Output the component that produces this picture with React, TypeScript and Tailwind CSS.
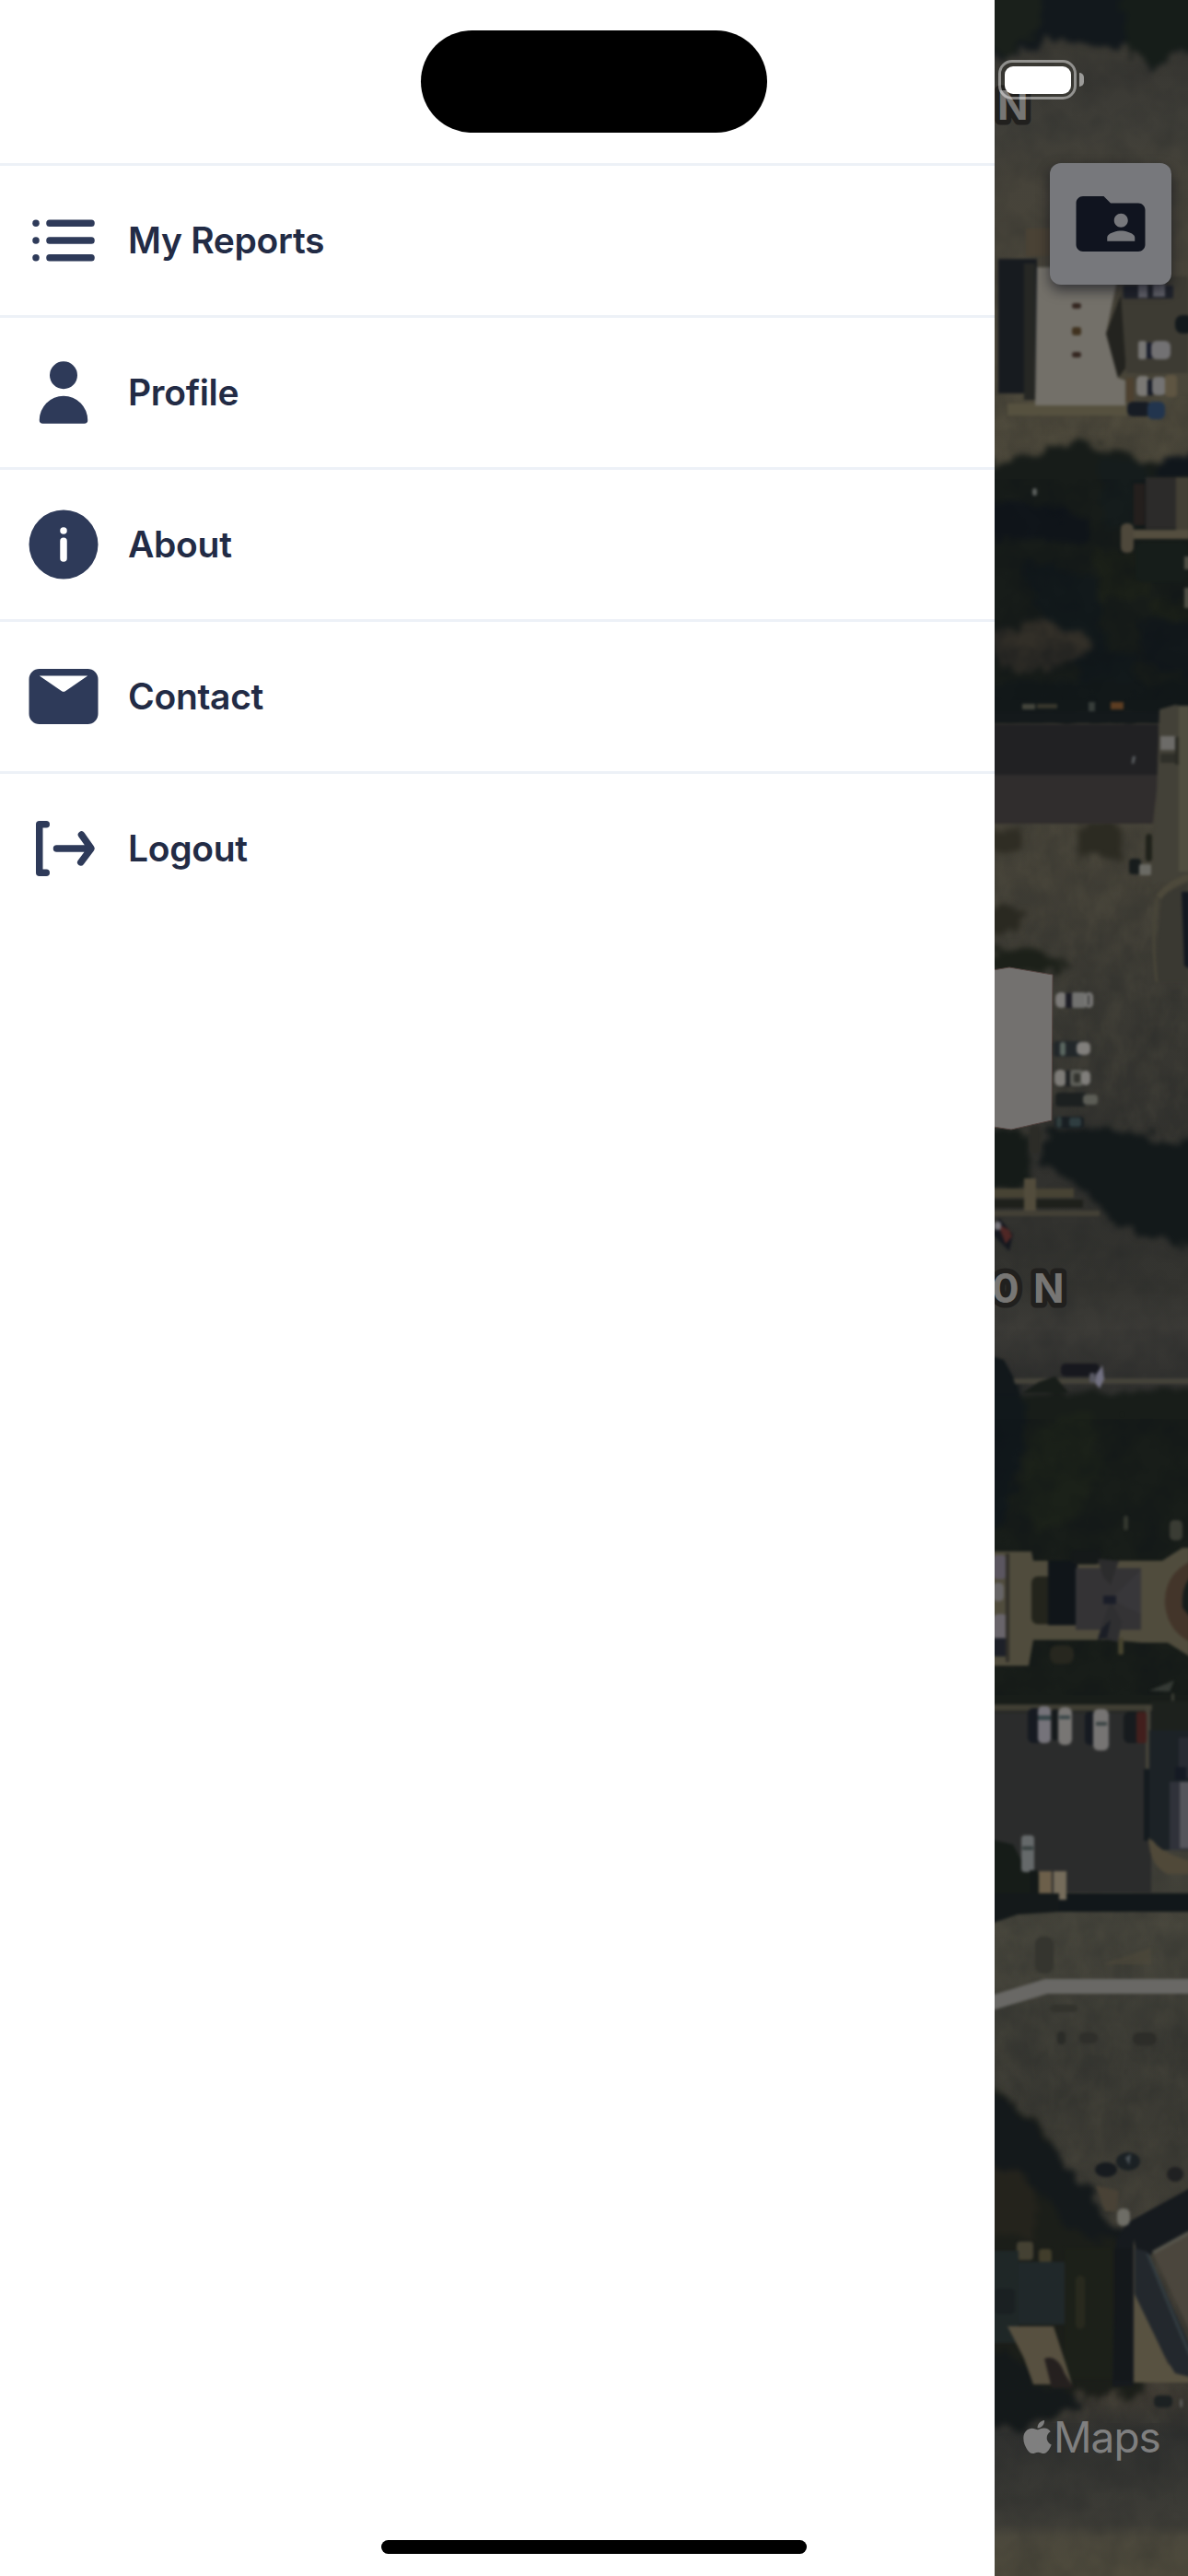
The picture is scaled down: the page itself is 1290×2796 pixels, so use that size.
import React from "react";
import { FaApple } from "react-icons/fa";
import { MdFolderShared } from "react-icons/md";

const iconClass = "h-[90px] w-[90px] shrink-0 fill-[#2e3a59]";

const ListIcon = () => (
  <svg viewBox="0 0 24 24" className={iconClass}>
    <circle cx="4" cy="7" r="1" />
    <circle cx="4" cy="12" r="1" />
    <circle cx="4" cy="17" r="1" />
    <rect x="7" y="11" width="14" height="2" rx=".94" />
    <rect x="7" y="16" width="14" height="2" rx=".94" />
    <rect x="7" y="6" width="14" height="2" rx=".94" />
  </svg>
);

const PersonIcon = () => (
  <svg viewBox="0 0 24 24" className={iconClass}>
    <path d="M12 11a4 4 0 1 0-4-4 4 4 0 0 0 4 4z" />
    <path d="M18 21a1 1 0 0 0 1-1 7 7 0 0 0-14 0 1 1 0 0 0 1 1z" />
  </svg>
);

const InfoIcon = () => (
  <svg viewBox="0 0 24 24" className={iconClass}>
    <path d="M12 2a10 10 0 1 0 10 10A10 10 0 0 0 12 2zm1 14a1 1 0 0 1-2 0v-5a1 1 0 0 1 2 0zm-1-7a1 1 0 1 1 1-1 1 1 0 0 1-1 1z" />
  </svg>
);

const EmailIcon = () => (
  <svg viewBox="0 0 24 24" className={iconClass}>
    <path d="M19 4H5a3 3 0 0 0-3 3v10a3 3 0 0 0 3 3h14a3 3 0 0 0 3-3V7a3 3 0 0 0-3-3zm0 2l-6.5 4.47a1 1 0 0 1-1 0L5 6z" />
  </svg>
);

const LogoutIcon = () => (
  <svg viewBox="0 0 24 24" className={iconClass}>
    <path d="M7 6a1 1 0 0 0 0-2H5a1 1 0 0 0-1 1v14a1 1 0 0 0 1 1h2a1 1 0 0 0 0-2H6V6z" />
    <path d="M20.82 11.42l-2.82-4a1 1 0 0 0-1.39-.24 1 1 0 0 0-.24 1.4L18.09 11H10a1 1 0 0 0 0 2h8l-1.8 2.4a1 1 0 0 0 .2 1.4 1 1 0 0 0 .6.2 1 1 0 0 0 .8-.4l3-4a1 1 0 0 0 .02-1.18z" />
  </svg>
);

const items = [
  { label: "My Reports", Icon: ListIcon },
  { label: "Profile", Icon: PersonIcon },
  { label: "About", Icon: InfoIcon },
  { label: "Contact", Icon: EmailIcon },
  { label: "Logout", Icon: LogoutIcon },
];

type Box = [number, number, number, number, string, number?];
const boxes = (list: Box[]) =>
  list.map(([x, y, w, h, fill, rx], i) => (
    <rect key={i} x={x} y={y} width={w} height={h} fill={fill} rx={rx ?? 0} />
  ));

/* Dimmed satellite imagery, drawn in screen coordinates. */
function Satellite() {
  return (
    <svg viewBox="1080 0 210 2796" className="absolute inset-0 h-full w-full">
      <defs>
        <filter id="soft" x="-5%" y="-1%" width="110%" height="102%" colorInterpolationFilters="sRGB">
          <feGaussianBlur stdDeviation="1.6" />
        </filter>
        <filter id="rough" x="-10%" y="-5%" width="120%" height="110%" colorInterpolationFilters="sRGB">
          <feTurbulence type="fractalNoise" baseFrequency="0.06" numOctaves="3" seed="4" />
          <feDisplacementMap in="SourceGraphic" scale="24" xChannelSelector="R" yChannelSelector="G" />
          <feGaussianBlur stdDeviation="3" />
        </filter>
        <filter id="mottle" x="0" y="0" width="100%" height="100%" colorInterpolationFilters="sRGB">
          <feTurbulence type="fractalNoise" baseFrequency="0.03" numOctaves="3" seed="9" />
          <feColorMatrix values="0 0 0 0 0.05  0 0 0 0 0.07  0 0 0 0 0.09  2 0 0 0 -0.7" />
        </filter>
        <filter id="light" x="0" y="0" width="100%" height="100%" colorInterpolationFilters="sRGB">
          <feTurbulence type="fractalNoise" baseFrequency="0.05 0.03" numOctaves="3" seed="21" />
          <feColorMatrix values="0 0 0 0 0.42  0 0 0 0 0.40  0 0 0 0 0.32  1.6 0 0 0 -0.65" />
        </filter>
        <linearGradient id="ground" gradientUnits="userSpaceOnUse" x1="0" y1="0" x2="0" y2="2796">
          <stop offset="0" stopColor="#3f3d34" />
          <stop offset=".03" stopColor="#3a3934" />
          <stop offset=".05" stopColor="#3f3e38" />
          <stop offset=".07" stopColor="#46433a" />
          <stop offset=".16" stopColor="#4b473a" />
          <stop offset=".33" stopColor="#454238" />
          <stop offset=".39" stopColor="#3a3933" />
          <stop offset=".46" stopColor="#31312e" />
          <stop offset=".5" stopColor="#343430" />
          <stop offset=".515" stopColor="#3c3b37" />
          <stop offset=".535" stopColor="#31312f" />
          <stop offset=".75" stopColor="#45443b" />
          <stop offset=".8" stopColor="#393933" />
          <stop offset=".86" stopColor="#403e36" />
          <stop offset=".93" stopColor="#3f3b33" />
          <stop offset=".945" stopColor="#30312f" />
          <stop offset=".98" stopColor="#3e3d37" />
          <stop offset=".985" stopColor="#4b483c" />
          <stop offset="1" stopColor="#4e4a3c" />
        </linearGradient>
      </defs>
      <rect x="1080" y="0" width="210" height="2796" fill="url(#ground)" />
      <rect x="1080" y="430" width="210" height="830" filter="url(#light)" opacity=".22" />
      <rect x="1080" y="2070" width="210" height="560" filter="url(#light)" opacity=".18" />
      <rect x="1080" y="0" width="210" height="2796" filter="url(#mottle)" opacity=".14" />

      {/* tree canopy, lawns and cast shadows */}
      <g filter="url(#rough)">
        <path d="M1060 -20H1310V55L1275 60 1252 82 1225 52 1180 48 1135 38 1120 55 1060 65z" fill="#12181c" />
        <path d="M1060 -20H1128L1130 25 1105 55 1060 60z" fill="#1a201b" />
        <path d="M1215 -10H1310V50L1275 58 1252 80 1225 52z" fill="#161d19" />
        <path d="M1060 505L1130 492 1165 478 1215 488 1245 505 1310 485V780H1060z" fill="#171c19" />
        <path d="M1060 540L1150 550 1190 570 1180 590 1060 582z" fill="#10151a" />
        <path d="M1190 495L1245 505 1248 570 1200 575z" fill="#151c1c" />
        <path d="M1260 495L1310 488V518H1260z" fill="#10161b" />
        <path d="M1185 600H1250V670L1300 690V650H1190z" fill="#1b2018" />
        <path d="M1110 610L1190 625 1200 700 1235 710 1230 760 1180 740 1120 650z" fill="#12191b" />
        <path d="M1070 690L1130 675 1180 690 1190 705 1135 730 1090 725z" fill="#322f28" />
        <path d="M1240 670H1310V740L1240 720z" fill="#12181b" />
        <path d="M1060 740H1310V782H1060z" fill="#121819" />
        <path d="M1170 895L1215 893 1220 935 1190 925 1170 930z" fill="#2c2b22" />
        <path d="M1060 905L1105 900 1108 920 1060 925z" fill="#2f2d24" />
        <path d="M1060 985L1115 985 1100 1010 1060 1018z" fill="#2a2921" />
        <path d="M1060 1035L1120 1028 1160 1050 1120 1058 1060 1055z" fill="#1c2019" />
        <path d="M1135 1228L1200 1225 1290 1240 1310 1240V1358L1260 1342 1215 1332 1190 1305 1170 1285 1130 1265z" fill="#13191a" />
        <path d="M1060 1225L1115 1228 1122 1285 1060 1290z" fill="#151b18" />
        <path d="M1060 1510L1110 1512 1310 1508V1870H1060z" fill="#181d19" />
        <path d="M1060 1475L1095 1485 1115 1530 1105 1600 1090 1660H1060z" fill="#11181b" />
        <path d="M1120 1555L1150 1540 1185 1530 1195 1600 1170 1650 1130 1660 1105 1640z" fill="#1b2119" />
        <path d="M1060 2265L1090 2272 1130 2310 1170 2370 1210 2410 1230 2440 1240 2460V2600H1060z" fill="#1b1e19" />
        <path d="M1060 2270L1095 2280 1140 2330 1200 2400 1225 2430 1170 2430 1130 2380 1060 2345z" fill="#14191b" />
        <path d="M1060 2350L1110 2355 1130 2400 1120 2430 1060 2430z" fill="#24231c" />
        <path d="M1060 2545L1110 2560 1130 2590 1165 2595 1170 2615 1110 2635 1060 2635z" fill="#14191a" />
      </g>
      <rect x="1080" y="520" width="210" height="240" filter="url(#mottle)" opacity=".4" />
      <rect x="1080" y="1540" width="210" height="300" filter="url(#mottle)" opacity=".35" />

      <g filter="url(#soft)">
        {/* white-roofed building and its parked cars */}
        {boxes([
          [1114, 248, 30, 30, "#4a4235"],
          [1084, 281, 42, 146, "#171b1f"],
          [1112, 286, 12, 148, "#262724"],
          [1094, 438, 130, 13, "#56513f"],
        ])}
        <path d="M1126 290H1216L1201 362 1214 410 1222 413V440H1124z" fill="#737069" />
        <path d="M1217 320L1201 362 1214 410 1222 400V340z" fill="#23231f" />
        <path d="M1217 320L1222 300H1290V405H1223z" fill="#3d3b33" />
        {boxes([
          [1220, 310, 54, 14, "#20232b"],
          [1236, 308, 10, 15, "#62626a"],
          [1252, 308, 13, 14, "#62626a"],
          [1164, 329, 10, 6, "#33251f", 3],
          [1164, 355, 10, 9, "#40321f", 3],
          [1164, 382, 10, 6, "#33251f", 3],
          [1236, 370, 9, 20, "#777674", 3],
          [1245, 372, 7, 17, "#171b2a"],
          [1250, 370, 21, 20, "#727173", 6],
          [1223, 410, 8, 26, "#4e4130"],
          [1234, 408, 14, 22, "#7a7874", 5],
          [1246, 412, 6, 17, "#161a25"],
          [1251, 409, 15, 20, "#747373", 5],
          [1265, 407, 13, 24, "#5e5542", 4],
          [1224, 436, 26, 16, "#171c24", 6],
          [1246, 436, 19, 19, "#22354e", 6],
          [1276, 342, 20, 20, "#13191c", 8],
          [1121, 530, 5, 8, "#5a5e5b", 2],
        ])}
        {/* small grey roof and walkway */}
        {boxes([
          [1231, 525, 12, 45, "#241f1d"],
          [1244, 518, 34, 56, "#2c2b2a"],
          [1277, 518, 15, 60, "#434035"],
          [1222, 575, 70, 10, "#544e3f"],
          [1217, 568, 14, 32, "#4e483b", 6],
          [1233, 588, 57, 44, "#161d1a", 8],
          [1286, 604, 6, 14, "#4e4e44"],
          [1286, 638, 6, 22, "#4e4e44"],
          [1110, 764, 14, 6, "#45463d"],
          [1126, 764, 22, 5, "#38372d"],
          [1182, 762, 7, 10, "#383e3b"],
          [1206, 762, 14, 8, "#5c3d22"],
          [1070, 772, 190, 13, "#14191b"],
        ])}
        {/* long dark roof */}
        <path d="M1070 786H1258V841H1070z" fill="#212123" />
        <path d="M1070 841H1258L1252 894H1070z" fill="#302d2d" />
        <path d="M1229 829L1230 821H1233L1231 829z" fill="#65696c" />
        <path d="M1259 770L1276 765 1292 768V950L1250 960 1256 860z" fill="#434138" />
        <path d="M1280 766H1292V946H1280z" fill="#504e40" />
        {boxes([
          [1276, 800, 4, 30, "#2a2a24"],
          [1260, 799, 16, 15, "#6c6b68"],
          [1260, 818, 16, 10, "#2f2f29"],
          [1226, 932, 13, 17, "#171c1c", 4],
          [1244, 905, 7, 30, "#20221b", 4],
          [1237, 938, 13, 12, "#6a6a64", 2],
        ])}
        <path d="M1262 972L1290 958V1066H1258L1254 1050z" fill="#3a3932" />
        <path d="M1256 975C1252 1010 1252 1030 1256 1066" stroke="#484538" strokeWidth="3" fill="none" />
        <path d="M1258 974Q1270 958 1292 952" stroke="#4d493b" strokeWidth="7" fill="none" />
        <path d="M1283 968H1292V1052L1286 1048z" fill="#131820" />
      </g>

      {/* light warehouse */}
      <path d="M1078 1053L1096 1050 1143 1058 1142 1216 1098 1226 1078 1223z" fill="#73716f" stroke="#564643" strokeWidth="1" />
      <g filter="url(#soft)">
        {boxes([
          [1146, 1077, 13, 17, "#7d7b79", 6],
          [1157, 1078, 8, 16, "#1c1c24"],
          [1164, 1077, 15, 17, "#71716f", 2],
          [1178, 1077, 9, 17, "#7a7977", 5],
          [1181, 1080, 2, 11, "#3a3a3a"],
          [1144, 1130, 32, 17, "#22272a", 4],
          [1151, 1131, 6, 15, "#5a6660", 3],
          [1169, 1131, 15, 14, "#817f7c", 5],
          [1145, 1161, 13, 18, "#7e7c78", 6],
          [1157, 1162, 6, 17, "#1d2022"],
          [1162, 1161, 14, 18, "#5d5e58", 3],
          [1166, 1165, 7, 10, "#33342f", 2],
          [1174, 1162, 10, 16, "#807e7b", 5],
          [1146, 1186, 34, 15, "#1c2020", 4],
          [1176, 1188, 16, 11, "#5c5d56", 4],
          [1145, 1212, 32, 13, "#181e22", 4],
          [1147, 1212, 6, 12, "#303c3c", 3],
          [1161, 1213, 13, 10, "#2f3d40", 3],
        ])}
        {/* road verge */}
        {boxes([
          [1070, 1290, 96, 10, "#474334"],
          [1070, 1302, 106, 9, "#1e201b"],
          [1112, 1279, 13, 36, "#524c3c"],
          [1070, 1314, 124, 6, "#434036"],
          [1118, 1222, 12, 30, "#2c2c27", 5],
          [1070, 1496, 225, 6, "#45433a"],
        ])}
        <path d="M1078 1340L1085 1322 1100 1340 1096 1358z" fill="#15181f" />
        <path d="M1083 1328L1096 1335 1099 1342 1092 1350z" fill="#4f2725" />
        {boxes([
          [1080, 1326, 7, 9, "#76747a", 3],
          [1152, 1480, 42, 14, "#17181e", 5],
          [1183, 1490, 6, 11, "#595963", 3],
        ])}
        <path d="M1190 1492L1197 1482 1199 1497 1194 1507 1189 1501z" fill="#727182" />
        <path d="M1070 1470L1090 1476 1100 1495 1106 1515H1070z" fill="#12181b" />
        <path d="M1110 1512L1128 1500 1146 1494 1160 1512z" fill="#181d19" />
        {boxes([
          [1220, 1645, 5, 16, "#34372f", 3],
          [1218, 1535, 1, 1, "#20251d"],
          [1270, 1650, 14, 22, "#3a3c34", 5],
        ])}

        {/* house with circular drive */}
        <path d="M1078 1684H1120L1122 1694H1262L1284 1680H1292V1798L1268 1783H1240L1208 1780H1122L1117 1808H1078z" fill="#504c3d" />
        <path d="M1292 1695Q1263 1710 1265 1742 1268 1770 1292 1782z" fill="#43352a" />
        <path d="M1292 1712Q1282 1725 1284 1745L1292 1755z" fill="#171d1b" />
        {boxes([
          [1120, 1711, 24, 52, "#23241c", 7],
          [1138, 1694, 32, 70, "#101519"],
          [1163, 1682, 32, 16, "#151919", 5],
          [1168, 1702, 71, 67, "#343335"],
          [1078, 1688, 15, 26, "#5b5660", 5],
          [1078, 1718, 12, 20, "#676566", 5],
          [1078, 1752, 17, 28, "#69656b", 6],
          [1078, 1778, 16, 20, "#1d2028", 3],
          [1092, 1686, 4, 118, "#302e28"],
          [1214, 1778, 6, 18, "#46432f", 2],
        ])}
        <path d="M1192 1692L1215 1694 1206 1720 1198 1712z" fill="#2c2c2d" />
        <path d="M1206 1736L1218 1760 1214 1782 1192 1778z" fill="#2f2f31" />
        <path d="M1239 1704L1206 1736 1239 1752z" fill="#38373a" />
        <path d="M1198 1732h14v9h-14z" fill="#1a1d28" />
        <path d="M1196 1768L1206 1758 1202 1778 1192 1780z" fill="#1b1e26" />
        <path d="M1248 1835L1275 1824 1270 1836z" fill="#353a35" />
        {boxes([[1140, 1786, 26, 20, "#27271f", 8], [1272, 1838, 3, 12, "#3b3d35", 1]])}

        {/* parking lot */}
        {boxes([
          [1070, 1858, 180, 196, "#2b2c2c"],
          [1250, 1846, 44, 34, "#1d211d"],
          [1070, 1850, 181, 7, "#403e34"],
          [1244, 1852, 5, 70, "#444238"],
          [1116, 1854, 17, 38, "#161a21", 6],
          [1127, 1852, 14, 40, "#75737a", 5],
          [1127, 1862, 14, 5, "#354447"],
          [1142, 1855, 8, 34, "#161a1c", 4],
          [1149, 1853, 15, 41, "#787674", 6],
          [1150, 1862, 12, 4, "#3b4749"],
          [1178, 1858, 13, 36, "#161a21", 5],
          [1187, 1855, 17, 45, "#767473", 6],
          [1190, 1869, 12, 4, "#3b4445"],
          [1220, 1858, 18, 34, "#171b1e", 6],
          [1234, 1858, 11, 34, "#421f1d", 3],
          [1242, 1920, 20, 78, "#141a1e"],
          [1248, 1878, 46, 130, "#1c2226"],
          [1270, 1934, 24, 74, "#30323a"],
          [1281, 1934, 12, 72, "#55555b"],
          [1280, 1886, 12, 44, "#282b33"],
          [1276, 1918, 12, 14, "#151a24"],
        ])}
        <path d="M1070 1995L1100 2002 1112 2025 1130 2035 1132 2060H1070z" fill="#161c18" />
        {boxes([
          [1109, 1992, 14, 40, "#65696a", 4],
          [1110, 2004, 12, 4, "#37403f"],
          [1070, 2055, 225, 20, "#11171a"],
          [1118, 2030, 9, 30, "#141918"],
          [1128, 2031, 14, 31, "#6c5f4a"],
          [1144, 2031, 14, 31, "#756c5b"],
        ])}
        <path d="M1247 1995Q1248 2025 1268 2034H1292V2020Q1262 2012 1252 1998z" fill="#504939" />
        <path d="M1070 2055H1150V2075L1105 2078 1070 2090z" fill="#14191a" />
        <path d="M1070 2176L1136 2156H1300" stroke="#696865" strokeWidth="16" fill="none" />
        <path d="M1208 2128L1250 2114V2132H1198z" fill="#4f4a3b" opacity=".6" />
        {boxes([
          [1124, 2102, 20, 40, "#35352f", 8],
          [1140, 2176, 30, 8, "#33332d", 4],
          [1230, 2206, 26, 14, "#2d2d29", 7],
          [1148, 2205, 9, 14, "#2b2c28", 4],
          [1172, 2206, 20, 12, "#2f2f2b", 6],
        ])}

        {/* shrubs and angled building */}
        <ellipse cx="1201" cy="2355" rx="12" ry="8" fill="#171b1f" />
        <ellipse cx="1225" cy="2346" rx="13" ry="10" fill="#1b2124" />
        <path d="M1222 2342L1228 2338 1226 2350z" fill="#4b5358" />
        <ellipse cx="1276" cy="2360" rx="9" ry="8" fill="#202122" />
        <path d="M1190 2372L1215 2378 1212 2400 1200 2400z" fill="#494236" />
        <path d="M1225 2412L1292 2375V2422L1252 2444 1240 2460 1230 2590H1208L1212 2430z" fill="#161a1e" />
        <path d="M1252 2446L1292 2422V2530z" fill="#4b463d" />
        <path d="M1231 2430V2586H1292V2578L1268 2566 1246 2515z" fill="#585241" />
        <path d="M1232 2440L1246 2444 1292 2545V2580L1276 2576 1264 2556 1232 2490z" fill="#23282d" />
        <path d="M1246 2446L1292 2556" stroke="#343e42" strokeWidth="3" fill="none" />
        <path d="M1252 2445L1292 2423" stroke="#55544b" strokeWidth="4" fill="none" />
        {boxes([
          [1213, 2397, 14, 19, "#6e6d66", 6],
          [1210, 2440, 18, 144, "#14181b"],
          [1156, 2440, 52, 142, "#1c2019"],
          [1168, 2470, 10, 58, "#28291e", 5],
          [1104, 2433, 18, 20, "#444133", 4],
          [1128, 2441, 14, 15, "#413d2b", 4],
          [1070, 2443, 36, 100, "#1f2727"],
          [1106, 2455, 50, 68, "#20282a"],
          [1080, 2484, 22, 28, "#1a2022", 5],
          [1253, 2600, 20, 13, "#1c2122", 5],
          [1281, 2604, 3, 9, "#5c5c58", 2],
        ])}
        <path d="M1094 2525H1144L1158 2568 1164 2588H1122L1112 2560z" fill="#575040" />
        <path d="M1134 2560Q1148 2555 1156 2576L1166 2592 1142 2592z" fill="#25201f" />
      </g>

      <g
        fill="#777674"
        stroke="#21201e"
        strokeWidth="11"
        strokeLinejoin="round"
        paintOrder="stroke"
        className="font-['Inter',sans-serif] text-[44px] font-bold"
      >
        <text x="1083" y="130">N</text>
        <text x="1077" y="1414">0</text>
        <text x="1122" y="1414">N</text>
      </g>
    </svg>
  );
}

function Battery() {
  return (
    <div className="absolute top-[65px] left-[4px] flex items-center gap-[3px]">
      <div className="h-[43px] w-[85px] rounded-[15px] border-[3.5px] border-white/45 p-[3.5px]">
        <div className="h-full w-full rounded-[9px] bg-white" />
      </div>
      <div className="h-[15px] w-[5px] rounded-r-full bg-white/50" />
    </div>
  );
}

export default function App() {
  return (
    <div className="relative flex h-[2796px] w-[1290px] overflow-hidden bg-white font-['Inter','Liberation_Sans',sans-serif]">
      <nav className="flex w-[1080px] shrink-0 flex-col pt-[177px]">
        {items.map(({ label, Icon }) => (
          <button
            key={label}
            className="flex h-[165px] items-center border-t-[3px] border-[#edf1f7] pl-6 text-left"
          >
            <Icon />
            <span className="ml-[25px] text-[39px] leading-[48px] font-semibold tracking-[-0.3px] text-[#222b45]">
              {label}
            </span>
          </button>
        ))}
      </nav>

      <aside className="relative w-[210px] shrink-0 overflow-hidden bg-[#3b3a35]">
        <Satellite />
        <Battery />
        <button className="absolute top-[177px] left-[60px] flex h-[132px] w-[132px] items-center justify-center rounded-xl bg-[#77787c] shadow-[0_6px_14px_rgba(10,12,22,0.6)]">
          <MdFolderShared className="h-[90px] w-[90px] text-[#10141f]" />
        </button>
        <div className="absolute top-[2615px] left-[31px] flex h-[60px] items-center text-[#7f7f7f]">
          <FaApple className="h-[42px] w-[31px]" />
          <span className="ml-[2px] text-[46px] leading-[60px] tracking-[-1px]">Maps</span>
        </div>
      </aside>

      <div className="absolute top-[33px] left-[457px] h-[111px] w-[376px] rounded-full bg-black" />
      <div className="absolute top-[2757px] left-[414px] h-[15px] w-[462px] rounded-full bg-black" />
    </div>
  );
}
